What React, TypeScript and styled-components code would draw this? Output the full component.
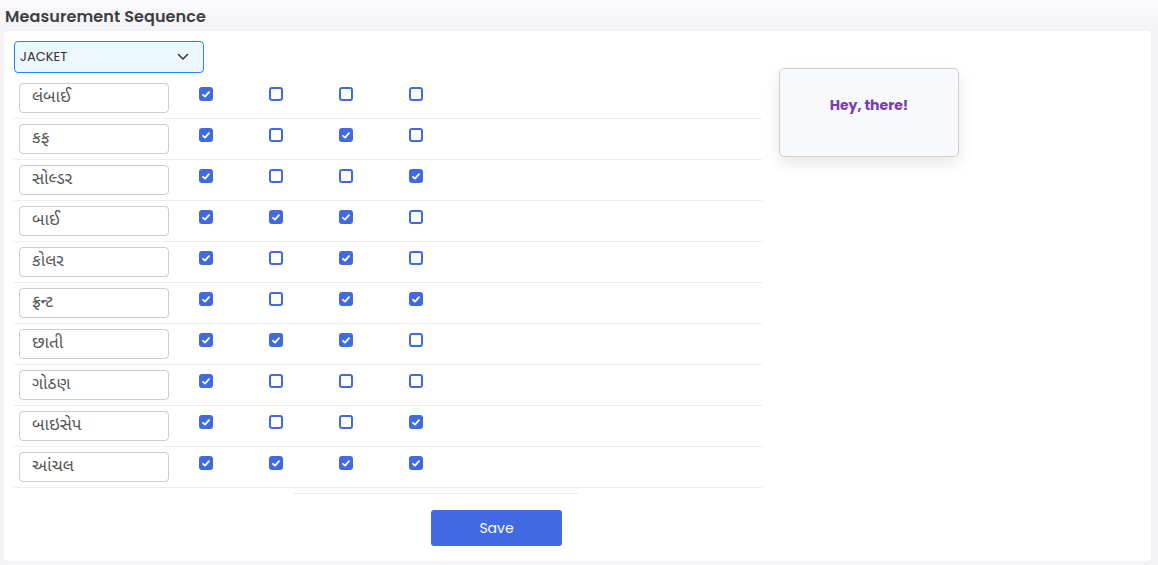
import React, { useState } from "react";
import styled, { createGlobalStyle } from "styled-components";

const GlobalStyle = createGlobalStyle`
  html, body {
    margin: 0;
    padding: 0;
    background: #f3f3f7;
    font-family: "Poppins", "Inter", "Noto Sans", "Liberation Sans", sans-serif;
  }
`;

const Page = styled.div`
  width: 1158px;
  height: 565px;
  box-sizing: border-box;
  padding: 0 7px 4px 4px;
  background: linear-gradient(to bottom, #fbfbfd 0px, #f3f3f7 30px, #f3f3f7 100%);
  display: flex;
  flex-direction: column;
`;

const Title = styled.h1`
  margin: 0;
  height: 31px;
  padding: 4px 0 0 1px;
  box-sizing: border-box;
  font-size: 16px;
  font-weight: 600;
  color: #3e3e44;
  letter-spacing: 0.1px;
`;

const Card = styled.div`
  flex: 1;
  background: #ffffff;
  border-radius: 4px;
  padding: 10px 10px 0 10px;
  display: flex;
  align-items: flex-start;
`;

const LeftColumn = styled.div`
  width: 748px;
  display: flex;
  flex-direction: column;
`;

const SelectBox = styled.div`
  width: 190px;
  height: 32px;
  box-sizing: border-box;
  background: #eef6ff;
  border: 1px solid #2684ff;
  border-radius: 4px;
  display: flex;
  align-items: center;
  justify-content: space-between;
  padding: 0 14px 0 5px;
  font-size: 13px;
  color: #333;
  margin-bottom: 5px;
`;

const Row = styled.div`
  display: grid;
  grid-template-columns: 157px repeat(4, 70px);
  align-items: start;
  height: 35px;
  padding-top: 5px;
  border-bottom: 1px solid #eceef3;
`;

const NameInput = styled.input`
  width: 150px;
  height: 30px;
  box-sizing: border-box;
  margin-left: 5px;
  border: 1px solid #c9ccd3;
  border-radius: 4px;
  padding: 0 12px;
  font-size: 17px;
  color: #555;
  font-family: "Noto Sans Gujarati", "Noto Sans", "Liberation Sans", sans-serif;
  outline: none;
`;

const Box = styled.span<{ $checked: boolean }>`
  justify-self: center;
  margin-top: 4px;
  width: 14px;
  height: 14px;
  box-sizing: border-box;
  border-radius: 3px;
  border: 2px solid #4169e1;
  background: ${(p) => (p.$checked ? "#4169e1" : "#ffffff")};
  display: flex;
  align-items: center;
  justify-content: center;
  cursor: pointer;
`;

const Footer = styled.div`
  display: flex;
  flex-direction: column;
  padding-top: 5px;
`;

const Divider = styled.div`
  width: 285px;
  height: 1px;
  margin-left: 279px;
  background: #eceef3;
`;

const SaveButton = styled.button`
  margin: 16px 0 0 417px;
  width: 131px;
  height: 36px;
  border: none;
  border-radius: 3px;
  background: #4169e1;
  color: #ffffff;
  font-size: 14px;
  font-family: inherit;
  cursor: pointer;
`;

const Tip = styled.div`
  margin: 27px 0 0 17px;
  width: 180px;
  height: 89px;
  box-sizing: border-box;
  background: #f8f9fb;
  border: 1px solid #cfcfd4;
  border-radius: 5px;
  box-shadow: 0 6px 16px rgba(0, 0, 0, 0.1);
  display: flex;
  justify-content: center;
  padding-top: 26px;
  font-size: 14px;
  font-weight: 700;
  color: #7b3bb0;
`;

const initial: { name: string; checks: boolean[] }[] = [
  { name: "લંબાઈ", checks: [true, false, false, false] },
  { name: "કફ", checks: [true, false, true, false] },
  { name: "સોલ્ડર", checks: [true, false, false, true] },
  { name: "બાઈ", checks: [true, true, true, false] },
  { name: "કોલર", checks: [true, false, true, false] },
  { name: "ફ્રન્ટ", checks: [true, false, true, true] },
  { name: "છાતી", checks: [true, true, true, false] },
  { name: "ગોઠણ", checks: [true, false, false, false] },
  { name: "બાઇસેપ", checks: [true, false, false, true] },
  { name: "આંચલ", checks: [true, true, true, true] },
];

const Check = () => (
  <svg width="8" height="7" viewBox="0 0 8 7">
    <path d="M1 3.8 L3 5.6 L7 1.2" fill="none" stroke="#fff" strokeWidth="1.8" strokeLinecap="round" strokeLinejoin="round" />
  </svg>
);

const Chevron = () => (
  <svg width="12" height="8" viewBox="0 0 12 8">
    <path d="M1.5 1.5 L6 6 L10.5 1.5" fill="none" stroke="#333" strokeWidth="1.5" strokeLinecap="round" strokeLinejoin="round" />
  </svg>
);

function App() {
  const [rows, setRows] = useState(initial);

  const toggle = (r: number, c: number) =>
    setRows((prev) =>
      prev.map((row, i) =>
        i === r ? { ...row, checks: row.checks.map((v, j) => (j === c ? !v : v)) } : row
      )
    );

  return (
    <Page>
      <GlobalStyle />
      <Title>Measurement Sequence</Title>
      <Card>
        <LeftColumn>
          <SelectBox>
            <span>JACKET</span>
            <Chevron />
          </SelectBox>
          {rows.map((row, i) => (
            <Row key={i}>
              <NameInput defaultValue={row.name} />
              {row.checks.map((v, j) => (
                <Box key={j} $checked={v} onClick={() => toggle(i, j)}>
                  {v && <Check />}
                </Box>
              ))}
            </Row>
          ))}
          <Footer>
            <Divider />
            <SaveButton>Save</SaveButton>
          </Footer>
        </LeftColumn>
        <Tip>Hey, there!</Tip>
      </Card>
    </Page>
  );
}

export default App;
